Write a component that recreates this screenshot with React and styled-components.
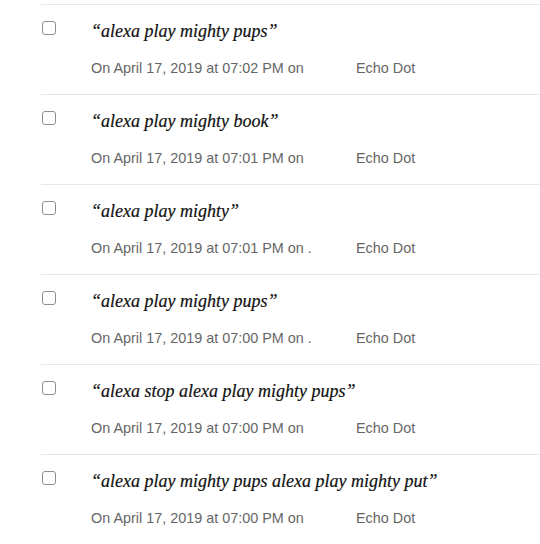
import React from 'react';
import styled, { createGlobalStyle } from 'styled-components';

const GlobalStyle = createGlobalStyle`
  html, body {
    margin: 0;
    padding: 0;
    background: #fff;
  }
  body {
    font-family: 'Liberation Sans', Arial, sans-serif;
  }
`;

const activities = [
  { id: 1, phrase: 'alexa play mighty pups', time: '07:02 PM', suffix: 'on', device: 'Echo Dot' },
  { id: 2, phrase: 'alexa play mighty book', time: '07:01 PM', suffix: 'on', device: 'Echo Dot' },
  { id: 3, phrase: 'alexa play mighty', time: '07:01 PM', suffix: 'on .', device: 'Echo Dot' },
  { id: 4, phrase: 'alexa play mighty pups', time: '07:00 PM', suffix: 'on .', device: 'Echo Dot' },
  { id: 5, phrase: 'alexa stop alexa play mighty pups', time: '07:00 PM', suffix: 'on', device: 'Echo Dot' },
  { id: 6, phrase: 'alexa play mighty pups alexa play mighty put', time: '07:00 PM', suffix: 'on', device: 'Echo Dot' },
];

const App = () => {
  return (
    <>
      <GlobalStyle />
      <Wrapper>
        {activities.map((item) => (
          <Row key={item.id}>
            <Check type='checkbox' aria-label={item.phrase} />
            <div>
              <Phrase>{`\u201c${item.phrase}\u201d`}</Phrase>
              <Meta>
                <When>
                  On April 17, 2019 at {item.time} {item.suffix}
                </When>
                <Device>{item.device}</Device>
              </Meta>
            </div>
          </Row>
        ))}
      </Wrapper>
    </>
  );
};

export default App;

const Wrapper = styled.div`
  padding-top: 4px;
  margin-left: 41px;
`;

const Row = styled.div`
  display: grid;
  grid-template-columns: 50px 1fr;
  height: 90px;
  box-sizing: border-box;
  border-top: 1px solid #e7e7e7;
  padding-top: 16px;
`;

const Check = styled.input`
  appearance: none;
  margin: 0 0 0 1px;
  width: 14px;
  height: 14px;
  box-sizing: border-box;
  border: 1px solid #8e8e8e;
  border-radius: 3px;
  background: #fff;
  cursor: pointer;
`;

const Phrase = styled.div`
  font-family: 'Liberation Serif', 'Times New Roman', serif;
  font-style: italic;
  font-size: 18px;
  line-height: 20px;
  color: #111;
  -webkit-text-stroke: 0.2px #111;
`;

const Meta = styled.div`
  display: flex;
  margin-top: 19px;
  font-size: 14.4px;
  line-height: 17px;
  color: #666;
`;

const When = styled.span`
  width: 265px;
`;

const Device = styled.span``;
